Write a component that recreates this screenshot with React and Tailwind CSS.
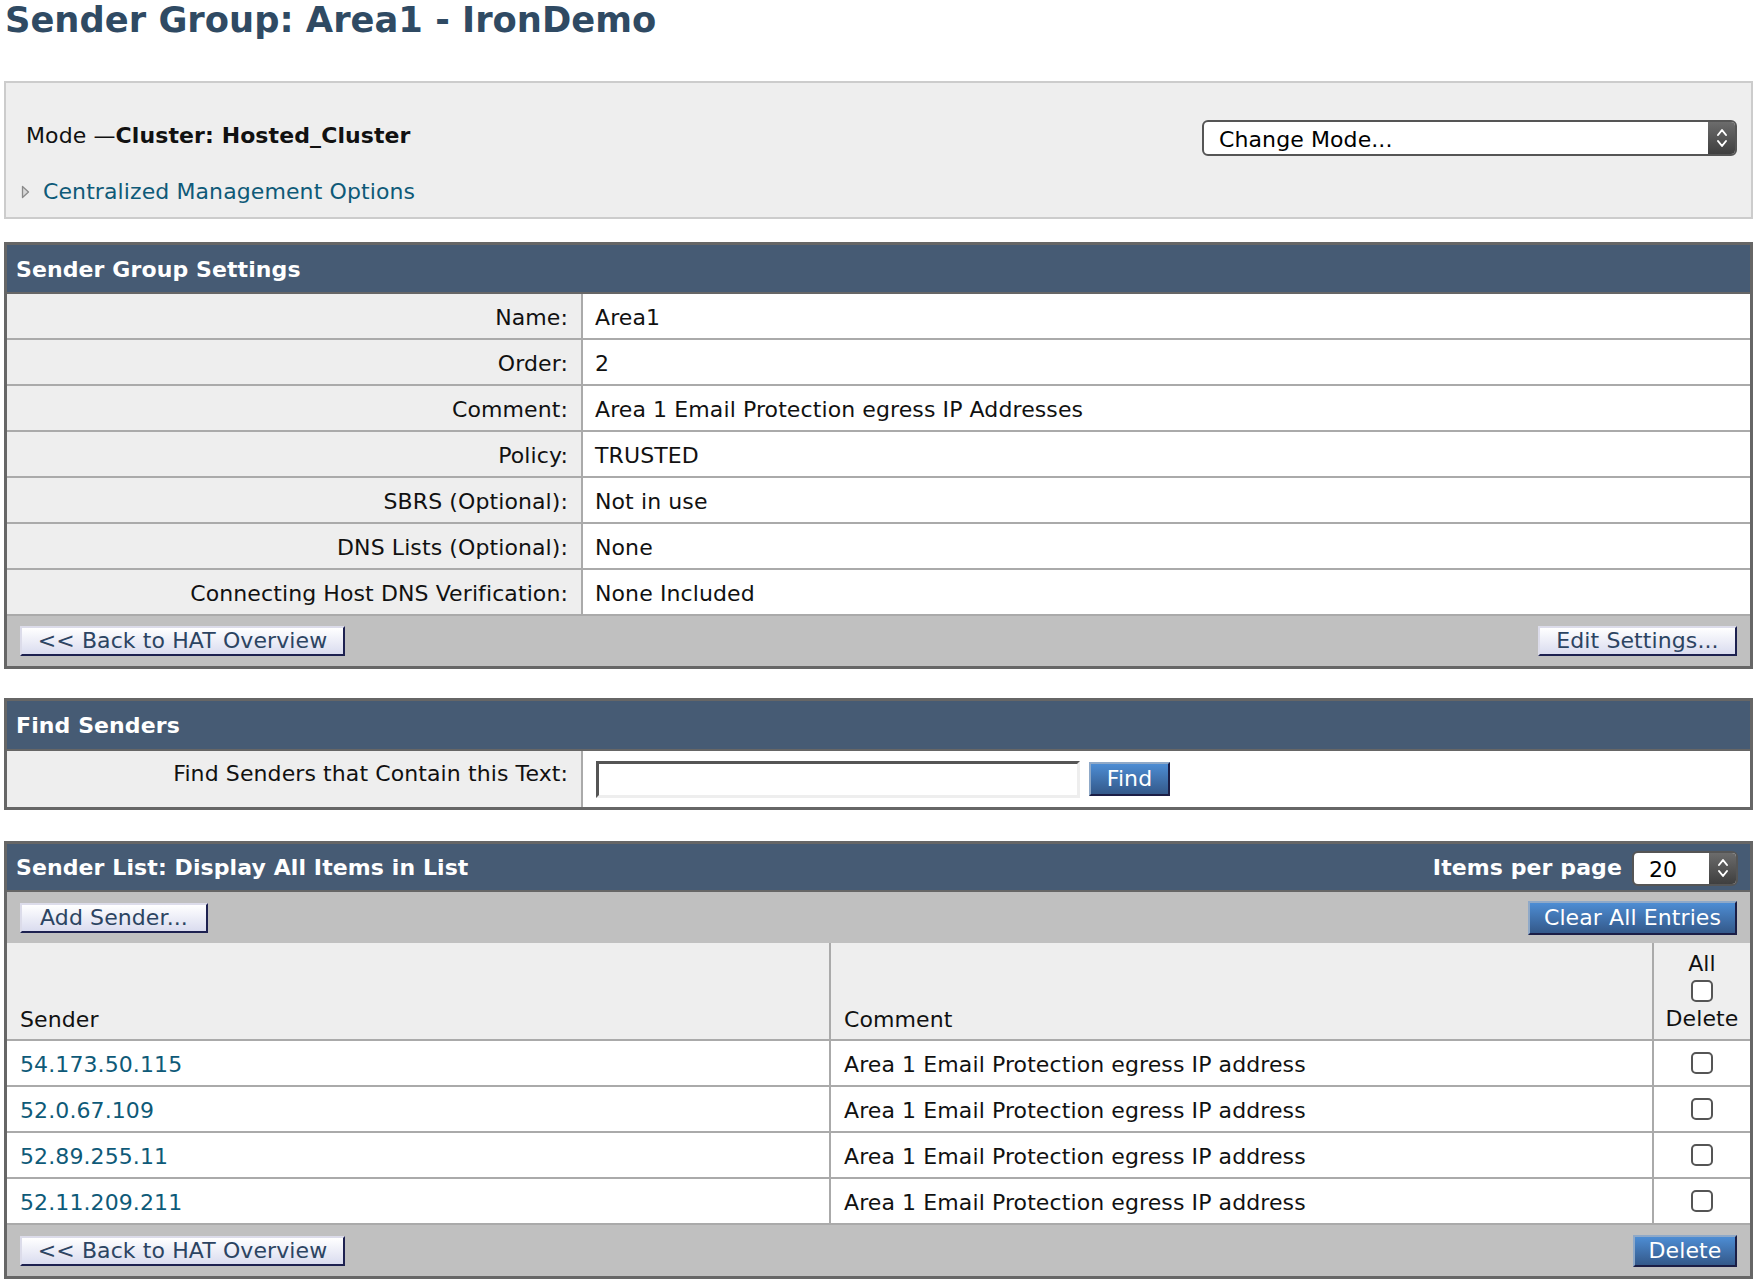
import React from 'react';

const Btn = ({ children, className = '' }) => (
  <button
    className={`h-[30px] px-[15px] text-[22px] leading-[26px] text-[#2c4462] bg-linear-to-b from-white to-[#dadcef] border-2 border-t-[#dcdcea] border-l-[#dcdcea] border-r-[#1d2150] border-b-[#1d2150] ${className}`}
  >
    {children}
  </button>
);

const BlueBtn = ({ children, className = '' }) => (
  <button
    className={`px-[13px] text-[22px] leading-[26px] text-white bg-linear-to-b from-[#4d8dd4] to-[#34598a] border-2 border-t-[#8fa9c8] border-l-[#8fa9c8] border-r-[#1b1e46] border-b-[#1b1e46] ${className}`}
  >
    {children}
  </button>
);

const Chevrons = () => (
  <svg width="12" height="22" viewBox="0 0 12 22" fill="none" stroke="white" strokeWidth="2" strokeLinecap="round" strokeLinejoin="round">
    <path d="M2 8 L6 3 L10 8" />
    <path d="M2 14 L6 19 L10 14" />
  </svg>
);

const Select = ({ value, className = '' }) => (
  <div className={`flex items-stretch rounded-[6px] border-2 border-[#555] bg-white overflow-hidden font-normal ${className}`}>
    <span className="flex-1 self-center pl-[15px] mt-[3px] text-[22px] leading-[26px] text-black">{value}</span>
    <span className="w-[27px] flex items-center justify-center bg-linear-to-b from-[#6c6c6c] to-[#3f3f3f]">
      <Chevrons />
    </span>
  </div>
);

const Check = () => (
  <span className="block w-[22px] h-[22px] rounded-[5px] border-2 border-[#555] bg-white" />
);

const settings = [
  ['Name:', 'Area1'],
  ['Order:', '2'],
  ['Comment:', 'Area 1 Email Protection egress IP Addresses'],
  ['Policy:', 'TRUSTED'],
  ['SBRS (Optional):', 'Not in use'],
  ['DNS Lists (Optional):', 'None'],
  ['Connecting Host DNS Verification:', 'None Included'],
];

const senders = ['54.173.50.115', '52.0.67.109', '52.89.255.11', '52.11.209.211'];

const PanelHeader = ({ children, className = '' }) => (
  <div className={`flex items-center justify-between bg-[#465b74] border-b-2 border-[#666] px-[9px] pt-[2px] text-white font-bold text-[22px] leading-[26px] ${className}`}>
    {children}
  </div>
);

export default function App() {
  return (
    <div className="min-h-screen bg-white font-['DejaVu_Sans',Verdana,sans-serif] text-[22px] leading-[26px] text-[#111] tracking-[0.1px]">
      <h1 className="pl-[5px] text-[35.3px] leading-[40px] font-bold text-[#2f4a63] tracking-normal">Sender Group: Area1 - IronDemo</h1>

      {/* Mode panel */}
      <div className="ml-[4px] w-[1749px] mt-[41px] h-[138px] border-2 border-[#ccc] bg-[#eee] flex justify-between">
        <div className="pt-[40px] pl-[15px]">
          <div className="pl-[5px]">
            Mode —<span className="font-bold">Cluster: Hosted_Cluster</span>
          </div>
          <div className="mt-[30px] flex items-center gap-[13px]">
            <svg width="9" height="14" viewBox="0 0 9 14">
              <path d="M1.5 1.5 L7.5 7 L1.5 12.5 Z" fill="#d8d8d8" stroke="#8a8a8a" strokeWidth="1.3" strokeLinejoin="round" />
            </svg>
            <span className="text-[#0e5a78]">Centralized Management Options</span>
          </div>
        </div>
        <div className="pt-[37px] pr-[14px]">
          <Select value="Change Mode..." className="w-[535px] h-[36px]" />
        </div>
      </div>

      {/* Sender Group Settings */}
      <div className="ml-[4px] w-[1749px] mt-[23px] border-[3px] border-[#666]">
        <PanelHeader className="h-[49px]">Sender Group Settings</PanelHeader>
        {settings.map(([k, v]) => (
          <div key={k} className="grid grid-cols-[576px_1fr] border-b-2 border-[#aaa]">
            <div className="bg-[#eee] text-right pr-[13px] pt-[11px] pb-[7px] border-r-2 border-[#aaa]">{k}</div>
            <div className="bg-white pl-[12px] pt-[11px] pb-[7px]">{v}</div>
          </div>
        ))}
        <div className="h-[50px] bg-[#c0c0c0] flex items-center justify-between px-[13px]">
          <Btn className="w-[325px]">&lt;&lt; Back to HAT Overview</Btn>
          <Btn className="w-[199px]">Edit Settings...</Btn>
        </div>
      </div>

      {/* Find Senders */}
      <div className="ml-[4px] w-[1749px] mt-[29px] border-[3px] border-[#666]">
        <PanelHeader className="h-[50px]">Find Senders</PanelHeader>
        <div className="grid grid-cols-[576px_1fr] h-[56px]">
          <div className="bg-[#eee] text-right pr-[13px] pt-[10px] border-r-2 border-[#aaa]">Find Senders that Contain this Text:</div>
          <div className="bg-white pl-[13px] flex items-center gap-[9px]">
            <div className="w-[484px] h-[37px] bg-white border-[3px] border-t-[#555] border-l-[#555] border-r-[#eee] border-b-[#eee]" />
            <BlueBtn className="h-[34px] w-[81px]">Find</BlueBtn>
          </div>
        </div>
      </div>

      {/* Sender List */}
      <div className="ml-[4px] w-[1749px] mt-[31px] border-[3px] border-[#666]">
        <PanelHeader className="h-[48px] pr-[12px]">
          <span>Sender List: Display All Items in List</span>
          <div className="flex items-center gap-[10px]">
            <span>Items per page</span>
            <Select value="20" className="w-[106px] h-[35px]" />
          </div>
        </PanelHeader>
        <div className="h-[51px] bg-[#c0c0c0] flex items-center justify-between px-[13px]">
          <Btn className="w-[188px]">Add Sender...</Btn>
          <BlueBtn className="h-[34px] w-[209px]">Clear All Entries</BlueBtn>
        </div>
        <div className="grid grid-cols-[824px_823px_1fr] bg-[#eee] h-[98px] border-b-2 border-[#aaa]">
          <div className="flex items-end pl-[13px] pb-[6px] border-r-2 border-[#aaa]">Sender</div>
          <div className="flex items-end pl-[13px] pb-[6px] border-r-2 border-[#aaa]">Comment</div>
          <div className="flex flex-col items-center pt-[8px]">
            <span>All</span>
            <span className="mt-[3px]">
              <Check />
            </span>
            <span className="mt-[4px]">Delete</span>
          </div>
        </div>
        {senders.map((ip) => (
          <div key={ip} className="grid grid-cols-[824px_823px_1fr] bg-white border-b-2 border-[#aaa]">
            <div className="pl-[13px] pt-[11px] pb-[7px] border-r-2 border-[#aaa] text-[#0e5a78]">{ip}</div>
            <div className="pl-[13px] pt-[11px] pb-[7px] border-r-2 border-[#aaa]">Area 1 Email Protection egress IP address</div>
            <div className="flex items-center justify-center">
              <Check />
            </div>
          </div>
        ))}
        <div className="h-[51px] bg-[#c0c0c0] flex items-center justify-between px-[13px]">
          <Btn className="w-[325px]">&lt;&lt; Back to HAT Overview</Btn>
          <BlueBtn className="h-[32px] w-[104px]">Delete</BlueBtn>
        </div>
      </div>
    </div>
  );
}
